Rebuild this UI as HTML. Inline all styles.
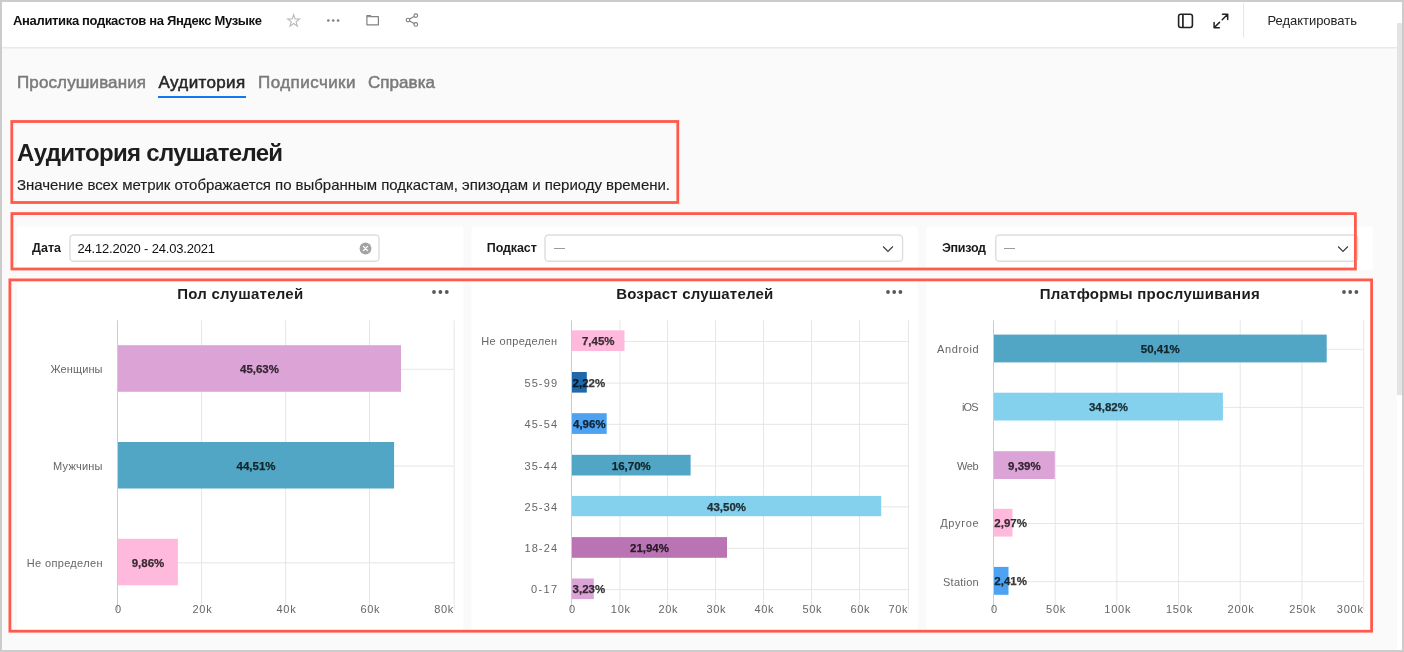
<!DOCTYPE html>
<html lang="ru"><head><meta charset="utf-8"><title>Аналитика подкастов на Яндекс Музыке</title>
<style>
html,body{margin:0;padding:0}body{width:1404px;height:652px;overflow:hidden;position:relative;background:#fafafa;font-family:"Liberation Sans", sans-serif;}
div{box-sizing:border-box}svg{position:absolute;overflow:visible}
#root{position:absolute;left:0;top:0;width:1404px;height:652px;will-change:transform}
</style></head><body><div id="root">
<div style="position:absolute;left:0px;top:0px;width:1404px;height:48px;background:#fff;"></div>
<svg style="left:0;top:0" width="1404" height="60"><path d="M0 47.8 H1404" stroke="#e0e0e0" stroke-width="1"/></svg>
<div style="position:absolute;top:12.20px;font-size:13px;line-height:17px;font-weight:700;color:#111;white-space:nowrap;letter-spacing:-0.336px;left:13px;">Аналитика подкастов на Яндекс Музыке</div>
<svg style="left:285px;top:12px" width="17" height="17" viewBox="0 0 17 17"><path d="M8.65 2.70 L10.09 7.02 L14.64 7.05 L10.98 9.76 L12.35 14.10 L8.65 11.45 L4.95 14.10 L6.32 9.76 L2.66 7.05 L7.21 7.02 Z" fill="none" stroke="#b7b7b7" stroke-width="1.05" stroke-linejoin="miter"/></svg>
<svg style="left:320px;top:14px" width="26" height="14" viewBox="0 0 26 14"><g fill="#7d7d7d"><circle cx="8.3" cy="6.5" r="1.3"/><circle cx="13.2" cy="6.5" r="1.3"/><circle cx="18.1" cy="6.5" r="1.3"/></g></svg>
<svg style="left:365px;top:13px" width="16" height="14" viewBox="0 0 16 14"><path d="M1.9 3.7 V11.8 H13.4 V3.7 H6.3 L5.4 2.6 H1.9 Z" fill="none" stroke="#828282" stroke-width="1.2" stroke-linejoin="round"/><path d="M1.9 3.7 H6.4" stroke="#828282" stroke-width="1"/></svg>
<svg style="left:404px;top:12px" width="16" height="16" viewBox="0 0 16 16"><g fill="none" stroke="#808080" stroke-width="1.15"><circle cx="11.8" cy="3.6" r="1.8"/><circle cx="4.0" cy="8" r="1.8"/><circle cx="11.8" cy="12.4" r="1.8"/><path d="M5.6 7.1 L10.2 4.5 M5.6 8.9 L10.2 11.5"/></g></svg>
<svg style="left:1177px;top:13px" width="17" height="16" viewBox="0 0 17 16"><rect x="1.6" y="1.3" width="13.8" height="13.2" rx="2.2" fill="none" stroke="#222" stroke-width="1.6"/><path d="M5.9 1.3 V14.5" stroke="#222" stroke-width="1.7"/></svg>
<svg style="left:1212px;top:13px" width="18" height="16" viewBox="0 0 18 16"><g fill="none" stroke="#222" stroke-width="1.5" stroke-linecap="round" stroke-linejoin="round"><path d="M10.2 6.8 L15.7 1.3 M10.5 1.3 H15.7 V6.5"/><path d="M7.5 9.4 L2.1 14.7 M2.1 9.5 V14.7 H7.3"/></g></svg>
<div style="position:absolute;left:1243px;top:3px;width:1px;height:35px;background:#e6e6e6;"></div>
<div style="position:absolute;top:12.20px;font-size:13px;line-height:17px;font-weight:400;color:#222;white-space:nowrap;letter-spacing:-0.02px;left:1267.4px;">Редактировать</div>
<div style="position:absolute;top:71.91px;font-size:17px;line-height:22px;font-weight:400;color:#7a7a7a;white-space:nowrap;letter-spacing:0.118px;left:17px;-webkit-text-stroke:0.5px currentColor;">Прослушивания</div>
<div style="position:absolute;top:71.91px;font-size:17px;line-height:22px;font-weight:400;color:#262626;white-space:nowrap;letter-spacing:0.348px;left:158.6px;-webkit-text-stroke:0.5px currentColor;">Аудитория</div>
<div style="position:absolute;top:71.91px;font-size:17px;line-height:22px;font-weight:400;color:#7a7a7a;white-space:nowrap;letter-spacing:0.441px;left:258px;-webkit-text-stroke:0.5px currentColor;">Подписчики</div>
<div style="position:absolute;top:71.91px;font-size:17px;line-height:22px;font-weight:400;color:#7a7a7a;white-space:nowrap;letter-spacing:0.05px;left:368px;-webkit-text-stroke:0.5px currentColor;">Справка</div>
<div style="position:absolute;left:158px;top:96px;width:88px;height:2px;background:#1078f0;"></div>
<div style="position:absolute;top:136.98px;font-size:24px;line-height:31px;font-weight:700;color:#1d1d1d;white-space:nowrap;letter-spacing:-0.7px;left:17px;">Аудитория слушателей</div>
<div style="position:absolute;top:175.00px;font-size:15px;line-height:20px;font-weight:400;color:#1d1d1d;white-space:nowrap;letter-spacing:-0.033px;left:17px;-webkit-text-stroke:0.15px currentColor;">Значение всех метрик отображается по выбранным подкастам, эпизодам и периоду времени.</div>
<svg style="left:0;top:0" width="1404" height="652"><rect x="17" y="226.4" width="446.3" height="43.6" rx="3" fill="#fff"/><rect x="471.5" y="226.4" width="446.3" height="43.6" rx="3" fill="#fff"/><rect x="926.4" y="226.4" width="446.3" height="43.6" rx="3" fill="#fff"/></svg>
<div style="position:absolute;top:239.67px;font-size:12.5px;line-height:16px;font-weight:700;color:#1a1a1a;white-space:nowrap;letter-spacing:0.023px;left:32px;">Дата</div>
<svg style="left:0;top:0" width="1404" height="652"><rect x="69.9" y="235" width="309.1" height="26.3" rx="3.6" fill="#fff" stroke="#dddddd" stroke-width="1.4"/></svg>
<div style="position:absolute;top:240.20px;font-size:13px;line-height:17px;font-weight:400;color:#111;white-space:nowrap;letter-spacing:-0.19px;left:77.5px;">24.12.2020 - 24.03.2021</div>
<svg style="left:359px;top:242px" width="13" height="13" viewBox="0 0 13 13"><circle cx="6.5" cy="6.5" r="5.9" fill="#a3a3a3"/><path d="M4.4 4.4 L8.6 8.6 M8.6 4.4 L4.4 8.6" stroke="#fff" stroke-width="1.3" stroke-linecap="round"/></svg>
<div style="position:absolute;top:239.67px;font-size:12.5px;line-height:16px;font-weight:700;color:#1a1a1a;white-space:nowrap;letter-spacing:-0.112px;left:486.8px;">Подкаст</div>
<svg style="left:0;top:0" width="1404" height="652"><rect x="545.0" y="235" width="357.6" height="26.3" rx="3.6" fill="#fff" stroke="#dddddd" stroke-width="1.4"/></svg>
<div style="position:absolute;left:554px;top:248px;width:11px;height:1px;background:#9c9c9c;"></div>
<svg style="left:881px;top:244px" width="14" height="10" viewBox="0 0 14 10"><path d="M2.1 2.5 L7 7.4 L11.9 2.5" fill="none" stroke="#3a3a3a" stroke-width="1.15"/></svg>
<div style="position:absolute;top:239.67px;font-size:12.5px;line-height:16px;font-weight:700;color:#1a1a1a;white-space:nowrap;letter-spacing:-0.287px;left:942px;">Эпизод</div>
<svg style="left:0;top:0" width="1404" height="652"><rect x="995.7" y="235" width="362.0" height="26.3" rx="3.6" fill="#fff" stroke="#dddddd" stroke-width="1.4"/></svg>
<div style="position:absolute;left:1004px;top:248px;width:11px;height:1px;background:#9c9c9c;"></div>
<svg style="left:1336px;top:244px" width="14" height="10" viewBox="0 0 14 10"><path d="M2.1 2.5 L7 7.4 L11.9 2.5" fill="none" stroke="#3a3a3a" stroke-width="1.15"/></svg>
<svg style="left:0;top:0" width="1404" height="652"><rect x="17" y="280" width="446.3" height="351.0" rx="3" fill="#fff"/><rect x="471.5" y="280" width="446.3" height="351.0" rx="3" fill="#fff"/><rect x="926.4" y="280" width="446.3" height="351.0" rx="3" fill="#fff"/></svg>
<div style="position:absolute;top:283.80px;font-size:15px;line-height:20px;font-weight:700;color:#1d1d1d;white-space:nowrap;letter-spacing:0.253px;left:-59.72px;width:600px;text-align:center;">Пол слушателей</div>
<svg style="left:424.0px;top:282px" width="40" height="20" viewBox="0 0 40 20"><g fill="#585858"><circle cx="10.00" cy="10" r="1.9"/><circle cx="16.40" cy="10" r="1.9"/><circle cx="22.80" cy="10" r="1.9"/></g></svg>
<svg style="left:0;top:0" width="1404" height="652"><path d="M201.60 320.3 V610.3" stroke="#e6e6e6" stroke-width="1"/><path d="M285.60 320.3 V610.3" stroke="#e6e6e6" stroke-width="1"/><path d="M369.50 320.3 V610.3" stroke="#e6e6e6" stroke-width="1"/><path d="M454.20 320.3 V610.3" stroke="#e6e6e6" stroke-width="1"/><path d="M117.5 369.30 H454.3" stroke="#e6e6e6" stroke-width="1"/><path d="M117.5 466.05 H454.3" stroke="#e6e6e6" stroke-width="1"/><path d="M117.5 562.85 H454.3" stroke="#e6e6e6" stroke-width="1"/><path d="M117.50 320.3 V610.3" stroke="#cccccc" stroke-width="1"/><rect x="118.00" y="345.20" width="283.00" height="46.60" fill="#DCA3D7"/><rect x="118.00" y="442.00" width="276.10" height="46.50" fill="#52A6C5"/><rect x="118.00" y="538.80" width="59.90" height="46.50" fill="#FFB9DD"/></svg>
<div style="position:absolute;top:362.19px;font-size:11px;line-height:14px;font-weight:400;color:#666666;white-space:nowrap;letter-spacing:0.101px;right:1301.40px;">Женщины</div>
<div style="position:absolute;top:362.02px;font-size:11.5px;line-height:15px;font-weight:700;color:rgba(0,0,0,0.76);white-space:nowrap;left:-40.50px;width:600px;text-align:center;-webkit-text-stroke:0.25px currentColor;">45,63%</div>
<div style="position:absolute;top:458.94px;font-size:11px;line-height:14px;font-weight:400;color:#666666;white-space:nowrap;letter-spacing:0.233px;right:1301.27px;">Мужчины</div>
<div style="position:absolute;top:458.77px;font-size:11.5px;line-height:15px;font-weight:700;color:rgba(0,0,0,0.76);white-space:nowrap;left:-43.95px;width:600px;text-align:center;-webkit-text-stroke:0.25px currentColor;">44,51%</div>
<div style="position:absolute;top:555.74px;font-size:11px;line-height:14px;font-weight:400;color:#666666;white-space:nowrap;letter-spacing:0.339px;right:1301.16px;">Не определен</div>
<div style="position:absolute;top:555.57px;font-size:11.5px;line-height:15px;font-weight:700;color:rgba(0,0,0,0.76);white-space:nowrap;left:-152.05px;width:600px;text-align:center;-webkit-text-stroke:0.25px currentColor;">9,86%</div>
<div style="position:absolute;top:602.49px;font-size:11px;line-height:14px;font-weight:400;color:#666666;white-space:nowrap;letter-spacing:-0.018px;left:-182.01px;width:600px;text-align:center;">0</div>
<div style="position:absolute;top:602.49px;font-size:11px;line-height:14px;font-weight:400;color:#666666;white-space:nowrap;letter-spacing:0.732px;left:-97.53px;width:600px;text-align:center;">20k</div>
<div style="position:absolute;top:602.49px;font-size:11px;line-height:14px;font-weight:400;color:#666666;white-space:nowrap;letter-spacing:0.732px;left:-13.53px;width:600px;text-align:center;">40k</div>
<div style="position:absolute;top:602.49px;font-size:11px;line-height:14px;font-weight:400;color:#666666;white-space:nowrap;letter-spacing:0.732px;left:70.37px;width:600px;text-align:center;">60k</div>
<div style="position:absolute;top:602.39px;font-size:11px;line-height:14px;font-weight:400;color:#666666;white-space:nowrap;letter-spacing:0.632px;right:950.17px;">80k</div>
<div style="position:absolute;top:283.80px;font-size:15px;line-height:20px;font-weight:700;color:#1d1d1d;white-space:nowrap;letter-spacing:0.173px;left:394.74px;width:600px;text-align:center;">Возраст слушателей</div>
<svg style="left:878.4px;top:282px" width="40" height="20" viewBox="0 0 40 20"><g fill="#585858"><circle cx="10.00" cy="10" r="1.9"/><circle cx="16.20" cy="10" r="1.9"/><circle cx="22.40" cy="10" r="1.9"/></g></svg>
<svg style="left:0;top:0" width="1404" height="652"><path d="M619.90 320.3 V610.3" stroke="#e6e6e6" stroke-width="1"/><path d="M667.50 320.3 V610.3" stroke="#e6e6e6" stroke-width="1"/><path d="M715.50 320.3 V610.3" stroke="#e6e6e6" stroke-width="1"/><path d="M763.50 320.3 V610.3" stroke="#e6e6e6" stroke-width="1"/><path d="M811.50 320.3 V610.3" stroke="#e6e6e6" stroke-width="1"/><path d="M859.50 320.3 V610.3" stroke="#e6e6e6" stroke-width="1"/><path d="M908.50 320.3 V610.3" stroke="#e6e6e6" stroke-width="1"/><path d="M571.5 341.45 H908.5" stroke="#e6e6e6" stroke-width="1"/><path d="M571.5 383.10 H908.5" stroke="#e6e6e6" stroke-width="1"/><path d="M571.5 424.35 H908.5" stroke="#e6e6e6" stroke-width="1"/><path d="M571.5 465.95 H908.5" stroke="#e6e6e6" stroke-width="1"/><path d="M571.5 506.85 H908.5" stroke="#e6e6e6" stroke-width="1"/><path d="M571.5 548.25 H908.5" stroke="#e6e6e6" stroke-width="1"/><path d="M571.5 589.60 H908.5" stroke="#e6e6e6" stroke-width="1"/><path d="M571.50 320.3 V610.3" stroke="#cccccc" stroke-width="1"/><rect x="572.00" y="330.30" width="52.50" height="20.70" fill="#FFB9DD"/><rect x="572.00" y="372.00" width="14.80" height="20.60" fill="#1F68A9"/><rect x="572.00" y="413.20" width="34.70" height="20.70" fill="#4DA2F1"/><rect x="572.00" y="454.80" width="118.60" height="20.70" fill="#52A6C5"/><rect x="572.00" y="495.90" width="309.20" height="20.30" fill="#84D1EE"/><rect x="572.00" y="537.10" width="155.00" height="20.70" fill="#BA74B3"/><rect x="572.00" y="578.50" width="21.80" height="20.60" fill="#DCA3D7"/></svg>
<div style="position:absolute;top:334.34px;font-size:11px;line-height:14px;font-weight:400;color:#666666;white-space:nowrap;letter-spacing:0.339px;right:846.66px;">Не определен</div>
<div style="position:absolute;top:334.17px;font-size:11.5px;line-height:15px;font-weight:700;color:rgba(0,0,0,0.76);white-space:nowrap;left:298.25px;width:600px;text-align:center;-webkit-text-stroke:0.25px currentColor;">7,45%</div>
<div style="position:absolute;top:375.99px;font-size:11px;line-height:14px;font-weight:400;color:#666666;white-space:nowrap;letter-spacing:1.116px;right:845.88px;">55-99</div>
<div style="position:absolute;top:375.82px;font-size:11.5px;line-height:15px;font-weight:700;color:rgba(0,0,0,0.76);white-space:nowrap;left:572.6px;-webkit-text-stroke:0.25px currentColor;">2,22%</div>
<div style="position:absolute;top:417.24px;font-size:11px;line-height:14px;font-weight:400;color:#666666;white-space:nowrap;letter-spacing:1.116px;right:845.88px;">45-54</div>
<div style="position:absolute;top:417.07px;font-size:11.5px;line-height:15px;font-weight:700;color:rgba(0,0,0,0.76);white-space:nowrap;left:289.35px;width:600px;text-align:center;-webkit-text-stroke:0.25px currentColor;">4,96%</div>
<div style="position:absolute;top:458.84px;font-size:11px;line-height:14px;font-weight:400;color:#666666;white-space:nowrap;letter-spacing:1.116px;right:845.88px;">35-44</div>
<div style="position:absolute;top:458.67px;font-size:11.5px;line-height:15px;font-weight:700;color:rgba(0,0,0,0.76);white-space:nowrap;left:331.30px;width:600px;text-align:center;-webkit-text-stroke:0.25px currentColor;">16,70%</div>
<div style="position:absolute;top:499.74px;font-size:11px;line-height:14px;font-weight:400;color:#666666;white-space:nowrap;letter-spacing:1.116px;right:845.88px;">25-34</div>
<div style="position:absolute;top:499.57px;font-size:11.5px;line-height:15px;font-weight:700;color:rgba(0,0,0,0.76);white-space:nowrap;left:426.60px;width:600px;text-align:center;-webkit-text-stroke:0.25px currentColor;">43,50%</div>
<div style="position:absolute;top:541.14px;font-size:11px;line-height:14px;font-weight:400;color:#666666;white-space:nowrap;letter-spacing:1.116px;right:845.88px;">18-24</div>
<div style="position:absolute;top:540.97px;font-size:11.5px;line-height:15px;font-weight:700;color:rgba(0,0,0,0.76);white-space:nowrap;left:349.50px;width:600px;text-align:center;-webkit-text-stroke:0.25px currentColor;">21,94%</div>
<div style="position:absolute;top:582.49px;font-size:11px;line-height:14px;font-weight:400;color:#666666;white-space:nowrap;letter-spacing:1.328px;right:845.67px;">0-17</div>
<div style="position:absolute;top:582.32px;font-size:11.5px;line-height:15px;font-weight:700;color:rgba(0,0,0,0.76);white-space:nowrap;left:572.6px;-webkit-text-stroke:0.25px currentColor;">3,23%</div>
<div style="position:absolute;top:602.49px;font-size:11px;line-height:14px;font-weight:400;color:#666666;white-space:nowrap;letter-spacing:-0.018px;left:271.99px;width:600px;text-align:center;">0</div>
<div style="position:absolute;top:602.49px;font-size:11px;line-height:14px;font-weight:400;color:#666666;white-space:nowrap;letter-spacing:0.732px;left:320.77px;width:600px;text-align:center;">10k</div>
<div style="position:absolute;top:602.49px;font-size:11px;line-height:14px;font-weight:400;color:#666666;white-space:nowrap;letter-spacing:0.732px;left:368.37px;width:600px;text-align:center;">20k</div>
<div style="position:absolute;top:602.49px;font-size:11px;line-height:14px;font-weight:400;color:#666666;white-space:nowrap;letter-spacing:0.732px;left:416.37px;width:600px;text-align:center;">30k</div>
<div style="position:absolute;top:602.49px;font-size:11px;line-height:14px;font-weight:400;color:#666666;white-space:nowrap;letter-spacing:0.732px;left:464.37px;width:600px;text-align:center;">40k</div>
<div style="position:absolute;top:602.49px;font-size:11px;line-height:14px;font-weight:400;color:#666666;white-space:nowrap;letter-spacing:0.732px;left:512.37px;width:600px;text-align:center;">50k</div>
<div style="position:absolute;top:602.49px;font-size:11px;line-height:14px;font-weight:400;color:#666666;white-space:nowrap;letter-spacing:0.732px;left:560.37px;width:600px;text-align:center;">60k</div>
<div style="position:absolute;top:602.39px;font-size:11px;line-height:14px;font-weight:400;color:#666666;white-space:nowrap;letter-spacing:0.632px;right:495.77px;">70k</div>
<div style="position:absolute;top:283.80px;font-size:15px;line-height:20px;font-weight:700;color:#1d1d1d;white-space:nowrap;letter-spacing:0.252px;left:849.78px;width:600px;text-align:center;">Платформы прослушивания</div>
<svg style="left:1334.0px;top:282px" width="40" height="20" viewBox="0 0 40 20"><g fill="#585858"><circle cx="10.00" cy="10" r="1.9"/><circle cx="16.20" cy="10" r="1.9"/><circle cx="22.40" cy="10" r="1.9"/></g></svg>
<svg style="left:0;top:0" width="1404" height="652"><path d="M1055.18 320.3 V610.3" stroke="#e6e6e6" stroke-width="1"/><path d="M1116.87 320.3 V610.3" stroke="#e6e6e6" stroke-width="1"/><path d="M1178.55 320.3 V610.3" stroke="#e6e6e6" stroke-width="1"/><path d="M1240.23 320.3 V610.3" stroke="#e6e6e6" stroke-width="1"/><path d="M1301.92 320.3 V610.3" stroke="#e6e6e6" stroke-width="1"/><path d="M1363.80 320.3 V610.3" stroke="#e6e6e6" stroke-width="1"/><path d="M993.5 349.30 H1363.8" stroke="#e6e6e6" stroke-width="1"/><path d="M993.5 407.40 H1363.8" stroke="#e6e6e6" stroke-width="1"/><path d="M993.5 465.90 H1363.8" stroke="#e6e6e6" stroke-width="1"/><path d="M993.5 523.50 H1363.8" stroke="#e6e6e6" stroke-width="1"/><path d="M993.5 581.65 H1363.8" stroke="#e6e6e6" stroke-width="1"/><path d="M993.50 320.3 V610.3" stroke="#cccccc" stroke-width="1"/><rect x="994.00" y="334.60" width="332.70" height="27.80" fill="#52A6C5"/><rect x="994.00" y="392.70" width="228.90" height="27.80" fill="#84D1EE"/><rect x="994.00" y="451.20" width="60.80" height="27.80" fill="#DCA3D7"/><rect x="994.00" y="508.80" width="18.50" height="27.80" fill="#FFB9DD"/><rect x="994.00" y="566.90" width="14.50" height="27.90" fill="#4DA2F1"/></svg>
<div style="position:absolute;top:342.19px;font-size:11px;line-height:14px;font-weight:400;color:#666666;white-space:nowrap;letter-spacing:0.631px;right:424.67px;">Android</div>
<div style="position:absolute;top:342.02px;font-size:11.5px;line-height:15px;font-weight:700;color:rgba(0,0,0,0.76);white-space:nowrap;left:860.35px;width:600px;text-align:center;-webkit-text-stroke:0.25px currentColor;">50,41%</div>
<div style="position:absolute;top:400.29px;font-size:11px;line-height:14px;font-weight:400;color:#666666;white-space:nowrap;letter-spacing:-0.819px;right:426.12px;">iOS</div>
<div style="position:absolute;top:400.12px;font-size:11.5px;line-height:15px;font-weight:700;color:rgba(0,0,0,0.76);white-space:nowrap;left:808.45px;width:600px;text-align:center;-webkit-text-stroke:0.25px currentColor;">34,82%</div>
<div style="position:absolute;top:458.79px;font-size:11px;line-height:14px;font-weight:400;color:#666666;white-space:nowrap;letter-spacing:-0.36px;right:425.66px;">Web</div>
<div style="position:absolute;top:458.62px;font-size:11.5px;line-height:15px;font-weight:700;color:rgba(0,0,0,0.76);white-space:nowrap;left:724.40px;width:600px;text-align:center;-webkit-text-stroke:0.25px currentColor;">9,39%</div>
<div style="position:absolute;top:516.39px;font-size:11px;line-height:14px;font-weight:400;color:#666666;white-space:nowrap;letter-spacing:0.71px;right:424.59px;">Другое</div>
<div style="position:absolute;top:516.22px;font-size:11.5px;line-height:15px;font-weight:700;color:rgba(0,0,0,0.76);white-space:nowrap;left:994.3px;-webkit-text-stroke:0.25px currentColor;">2,97%</div>
<div style="position:absolute;top:574.54px;font-size:11px;line-height:14px;font-weight:400;color:#666666;white-space:nowrap;letter-spacing:0.242px;right:425.06px;">Station</div>
<div style="position:absolute;top:574.37px;font-size:11.5px;line-height:15px;font-weight:700;color:rgba(0,0,0,0.76);white-space:nowrap;left:994.3px;-webkit-text-stroke:0.25px currentColor;">2,41%</div>
<div style="position:absolute;top:602.49px;font-size:11px;line-height:14px;font-weight:400;color:#666666;white-space:nowrap;letter-spacing:-0.018px;left:693.99px;width:600px;text-align:center;">0</div>
<div style="position:absolute;top:602.49px;font-size:11px;line-height:14px;font-weight:400;color:#666666;white-space:nowrap;letter-spacing:0.732px;left:756.05px;width:600px;text-align:center;">50k</div>
<div style="position:absolute;top:602.49px;font-size:11px;line-height:14px;font-weight:400;color:#666666;white-space:nowrap;letter-spacing:0.782px;left:817.76px;width:600px;text-align:center;">100k</div>
<div style="position:absolute;top:602.49px;font-size:11px;line-height:14px;font-weight:400;color:#666666;white-space:nowrap;letter-spacing:0.782px;left:879.44px;width:600px;text-align:center;">150k</div>
<div style="position:absolute;top:602.49px;font-size:11px;line-height:14px;font-weight:400;color:#666666;white-space:nowrap;letter-spacing:0.782px;left:941.12px;width:600px;text-align:center;">200k</div>
<div style="position:absolute;top:602.49px;font-size:11px;line-height:14px;font-weight:400;color:#666666;white-space:nowrap;letter-spacing:0.782px;left:1002.81px;width:600px;text-align:center;">250k</div>
<div style="position:absolute;top:602.39px;font-size:11px;line-height:14px;font-weight:400;color:#666666;white-space:nowrap;letter-spacing:0.749px;right:40.35px;">300k</div>
<svg style="left:0;top:0" width="1404" height="652"><rect x="11.8" y="121.5" width="666.00" height="81.00" fill="none" stroke="#ff5a4b" stroke-width="2.8"/></svg>
<svg style="left:0;top:0" width="1404" height="652"><rect x="11.9" y="213.6" width="1343.50" height="55.40" fill="none" stroke="#ff5a4b" stroke-width="2.8"/></svg>
<svg style="left:0;top:0" width="1404" height="652"><rect x="9.9" y="279.9" width="1361.70" height="351.30" fill="none" stroke="#ff5a4b" stroke-width="2.8"/></svg>
<div style="position:absolute;left:1397px;top:49px;width:5px;height:601px;background:#fff;"></div>
<div style="position:absolute;left:1397px;top:23px;width:5px;height:371.5px;background:#e4e4e4;"></div>
<div style="position:absolute;left:0;top:0;width:1404px;height:652px;border:2px solid #cccccc;"></div>
</div></body></html>
